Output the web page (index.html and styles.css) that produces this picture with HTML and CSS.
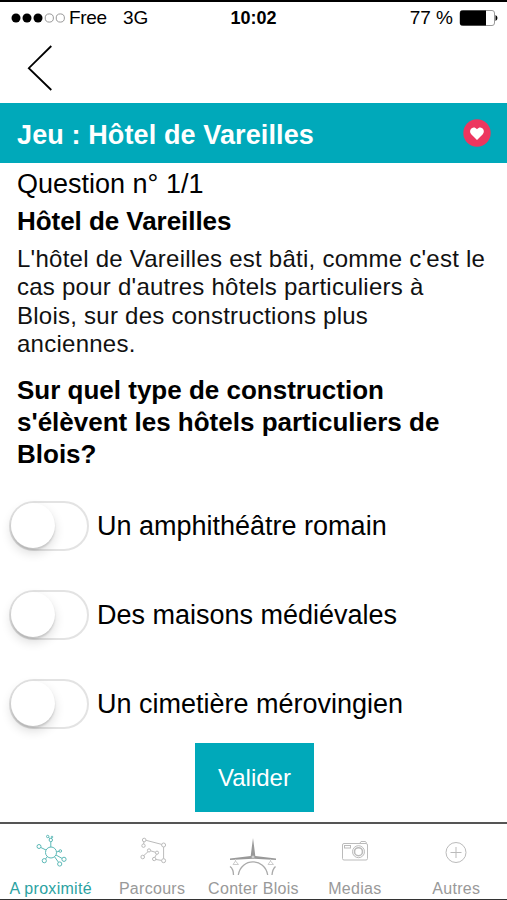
FILE: index.html
```html
<!DOCTYPE html>
<html lang="fr">
<head>
  <meta charset="UTF-8">
  <meta name="viewport" content="width=device-width, initial-scale=1.0">
  <title>Jeu : Hôtel de Vareilles</title>
  <link rel="stylesheet" href="styles.css">
</head>
<body>
  <div class="phone">
    <div class="status">
      <div class="network">
        <svg width="54" height="12" viewBox="0 0 54 12">
          <circle cx="5" cy="6" r="4.5"/>
          <circle cx="16" cy="6" r="4.5"/>
          <circle cx="27" cy="6" r="4.5"/>
          <g fill="none" stroke="#999">
            <circle cx="38.3" cy="6" r="4.1"/>
            <circle cx="49.3" cy="6" r="4.1"/>
          </g>
        </svg>
        <span class="carrier">Free</span>
        <span class="type">3G</span>
      </div>
      <div class="time">10:02</div>
      <div class="power">
        <span class="percent">77 %</span>
        <svg width="40" height="18" viewBox="0 0 40 18">
          <rect x="1" y="1.5" width="34.5" height="15" rx="2.5" fill="#fff" stroke="#999"/>
          <path d="M3 1.5H27V16.5H3Q1 16.5 1 14.5V3.5Q1 1.5 3 1.5Z"/>
          <path d="M36.5 6Q38.5 7 38.5 9T36.5 12Z"/>
        </svg>
      </div>
    </div>

    <div class="nav">
      <svg width="26" height="46" viewBox="0 0 26 46" fill="none" stroke="#000" stroke-width="1.8">
        <path d="M24.3 1L1.8 23.2L24.3 45"/>
      </svg>
    </div>

    <div class="title">
      <h1>Jeu : Hôtel de Vareilles</h1>
      <svg width="28" height="28" viewBox="0 0 28 28">
        <circle cx="14" cy="14" r="13.7" fill="#ed365f"/>
        <path d="M14 21L8.2 15.2C4.8 11.2 10.2 5.6 14 10.2C17.8 5.6 23.2 11.2 19.8 15.2Z" fill="#fff"/>
      </svg>
    </div>

    <div class="content">
      <p class="count">Question n° 1/1</p>
      <h2>Hôtel de Vareilles</h2>
      <p class="intro">L'hôtel de Vareilles est bâti, comme c'est le<br>cas pour d'autres hôtels particuliers à<br>Blois, sur des constructions plus<br>anciennes.</p>
      <h3>Sur quel type de construction<br>s'élèvent les hôtels particuliers de<br>Blois?</h3>
    </div>

    <div class="answers">
      <div class="answer"><div class="switch"><div class="knob"></div></div><span>Un amphithéâtre romain</span></div>
      <div class="answer"><div class="switch"><div class="knob"></div></div><span>Des maisons médiévales</span></div>
      <div class="answer"><div class="switch"><div class="knob"></div></div><span>Un cimetière mérovingien</span></div>
    </div>

    <button class="submit">Valider</button>

    <div class="tabs">
      <div class="tab active">
        <svg width="34" height="36" viewBox="0 0 34 36">
          <circle cx="17" cy="20.5" r="5.5"/>
          <circle cx="5" cy="14.5" r="2"/>
          <circle cx="10.3" cy="28.7" r="2.1"/>
          <circle cx="25.7" cy="32" r="2.1"/>
          <circle cx="30" cy="27.3" r="2.1"/>
          <circle cx="26.3" cy="19" r="1.3"/>
          <circle cx="16.8" cy="8" r="1.7"/>
          <circle cx="13.7" cy="4.5" r="1.2"/>
          <circle cx="18" cy="5" r=".8"/>
          <path d="M6.8 15.5L12 18M13.3 24.6L11.5 27M20.6 24.8L24.5 30.3M22 23L28 26.4M22.5 20L25 19.3M16.8 15V9.8M16 6.6L14.4 5.4"/>
        </svg>
        <span>A proximité</span>
      </div>
      <div class="tab">
        <svg width="34" height="36" viewBox="0 0 34 36">
          <circle cx="9.2" cy="8" r="1.8"/>
          <circle cx="8.5" cy="13.7" r="1.7"/>
          <circle cx="28.6" cy="13" r="2"/>
          <circle cx="28.6" cy="28.7" r="2"/>
          <circle cx="19.2" cy="27" r="1.7"/>
          <circle cx="22" cy="20.7" r="1.6"/>
          <circle cx="14" cy="18.4" r="1.6"/>
          <circle cx="7.7" cy="25" r="1.8"/>
          <path d="M9 9.8L8.6 12M11 8.3L26.7 12.4M28.6 15V26.7M26.6 28.4L20.9 27.5M19.8 25.4L21.5 22.2M20.5 20.3L15.6 18.8M13 19.7L8.8 23.6"/>
        </svg>
        <span>Parcours</span>
      </div>
      <div class="tab">
        <svg class="bridge" width="48" height="38" viewBox="0 0 48 38">
          <path d="M24 0L22.7 10L21.7 18L1 20.5V22L24 20.7L47 22V20.5L26.3 18L25.3 10Z" fill="#999" stroke="none"/>
          <path d="M9.3 37C12 19.5 36 19.5 38.7 37M1 28.5Q4.5 31 4.5 37M46.5 28.5Q43.5 31 43 37" stroke-width="1.3"/>
          <path d="M6.5 21V23L4 26.5H9.5L6.5 23M41.5 21V23L39 26.5H44.5L41.5 23" stroke="#ccc"/>
          <circle cx="24" cy="19" r="1.3" fill="#fff"/>
        </svg>
        <span>Conter Blois</span>
      </div>
      <div class="tab">
        <svg width="34" height="36" viewBox="0 0 34 36">
          <rect x="4.5" y="11.5" width="25" height="16.5" rx="1.5"/>
          <path d="M22 11L23 9.5H27.5L28.5 11"/>
          <rect x="6.5" y="13.5" width="6" height="2.5"/>
          <circle cx="20.5" cy="19.7" r="6"/>
          <circle cx="20.5" cy="19.7" r="4" stroke-width="1.6"/>
        </svg>
        <span>Medias</span>
      </div>
      <div class="tab">
        <svg width="34" height="36" viewBox="0 0 34 36">
          <circle cx="17" cy="20.5" r="10"/>
          <path d="M17 15V26M11.5 20.5H22.5"/>
        </svg>
        <span>Autres</span>
      </div>
    </div>
  </div>
</body>
</html>
```
FILE: styles.css
```css
* {
  box-sizing: border-box;
}
body {
  margin: 0;
  background: #fff;
  color: #000;
  font-family: "Liberation Sans", Arial, sans-serif;
}
h1, h2, h3, p {
  margin: 0;
  white-space: nowrap;
}
svg {
  display: block;
  flex: none;
}
.phone {
  width: 507px;
  height: 900px;
  display: flex;
  flex-direction: column;
  border-top: 2px solid #000;
  border-bottom: 1px solid #333;
  overflow: hidden;
}
.status {
  height: 34px;
  flex: none;
  display: grid;
  grid-template-columns: 1fr auto 1fr;
  align-items: center;
  padding: 0 8px 2px 11px;
  font-size: 19px;
}
.network, .power {
  display: flex;
  align-items: center;
}
.power {
  justify-content: flex-end;
}
.carrier {
  margin-left: 4px;
  letter-spacing: -0.3px;
}
.type {
  margin-left: 16px;
}
.time {
  font-weight: bold;
  font-size: 18px;
  margin-right: 3px;
}
.percent {
  margin-right: 6px;
}
.nav {
  height: 67px;
  flex: none;
  padding: 9px 0 0 27px;
}
.title {
  height: 60px;
  flex: none;
  display: flex;
  align-items: center;
  justify-content: space-between;
  padding: 3px 16px 0 17px;
  background: #00a9ba;
  color: #fff;
}
.title svg {
  margin-bottom: 3px;
}
.title h1 {
  padding-top: 2px;
  font-size: 27px;
  letter-spacing: 0.12px;
}
.content {
  height: 311px;
  flex: none;
  padding: 4px 17px 0;
}
.count {
  font-size: 27px;
  line-height: 34px;
}
h2 {
  font-size: 26px;
  line-height: 40px;
  letter-spacing: -0.05px;
}
.intro {
  margin-top: 4px;
  font-size: 24px;
  line-height: 28.3px;
  letter-spacing: 0.25px;
  color: #111;
}
h3 {
  margin-top: 16px;
  font-size: 26px;
  line-height: 32px;
}
.answers {
  display: flex;
  flex-direction: column;
  gap: 39px;
  padding: 27px 0 0 9px;
}
.answer {
  display: flex;
  align-items: center;
  height: 50px;
  font-size: 27px;
  white-space: nowrap;
}
.switch {
  width: 80px;
  height: 50px;
  margin-right: 8px;
  border: 2px solid #e3e3e3;
  border-radius: 25px;
  flex: none;
}
.knob {
  width: 44px;
  height: 45px;
  border-radius: 50%;
  background: #fff;
  box-shadow: 0 5px 11px rgba(0, 0, 0, 0.14), 0 2px 2px rgba(0, 0, 0, 0.14);
}
.submit {
  width: 119px;
  height: 69px;
  margin: 14px 0 0 195px;
  flex: none;
  border: none;
  background: #00a9ba;
  color: #fff;
  font-family: inherit;
  font-size: 24px;
}
.tabs {
  display: grid;
  grid-template-columns: repeat(5, 1fr);
  height: 77px;
  margin-top: auto;
  flex: none;
  border-top: 2px solid #555;
}
.tab {
  display: flex;
  flex-direction: column;
  align-items: center;
  padding-top: 8px;
  font-size: 16px;
  letter-spacing: 0.3px;
  line-height: 18px;
  color: #999;
  white-space: nowrap;
}
.tab svg {
  fill: none;
  stroke: #bbb;
  stroke-width: 1;
}
.tab .bridge {
  margin-top: 6px;
  margin-bottom: -8px;
  stroke: #aaa;
}
.tab span {
  margin-top: 12px;
}
.active {
  color: #2ba2a2;
}
.tab.active svg {
  stroke: #5cb9b7;
}
```
